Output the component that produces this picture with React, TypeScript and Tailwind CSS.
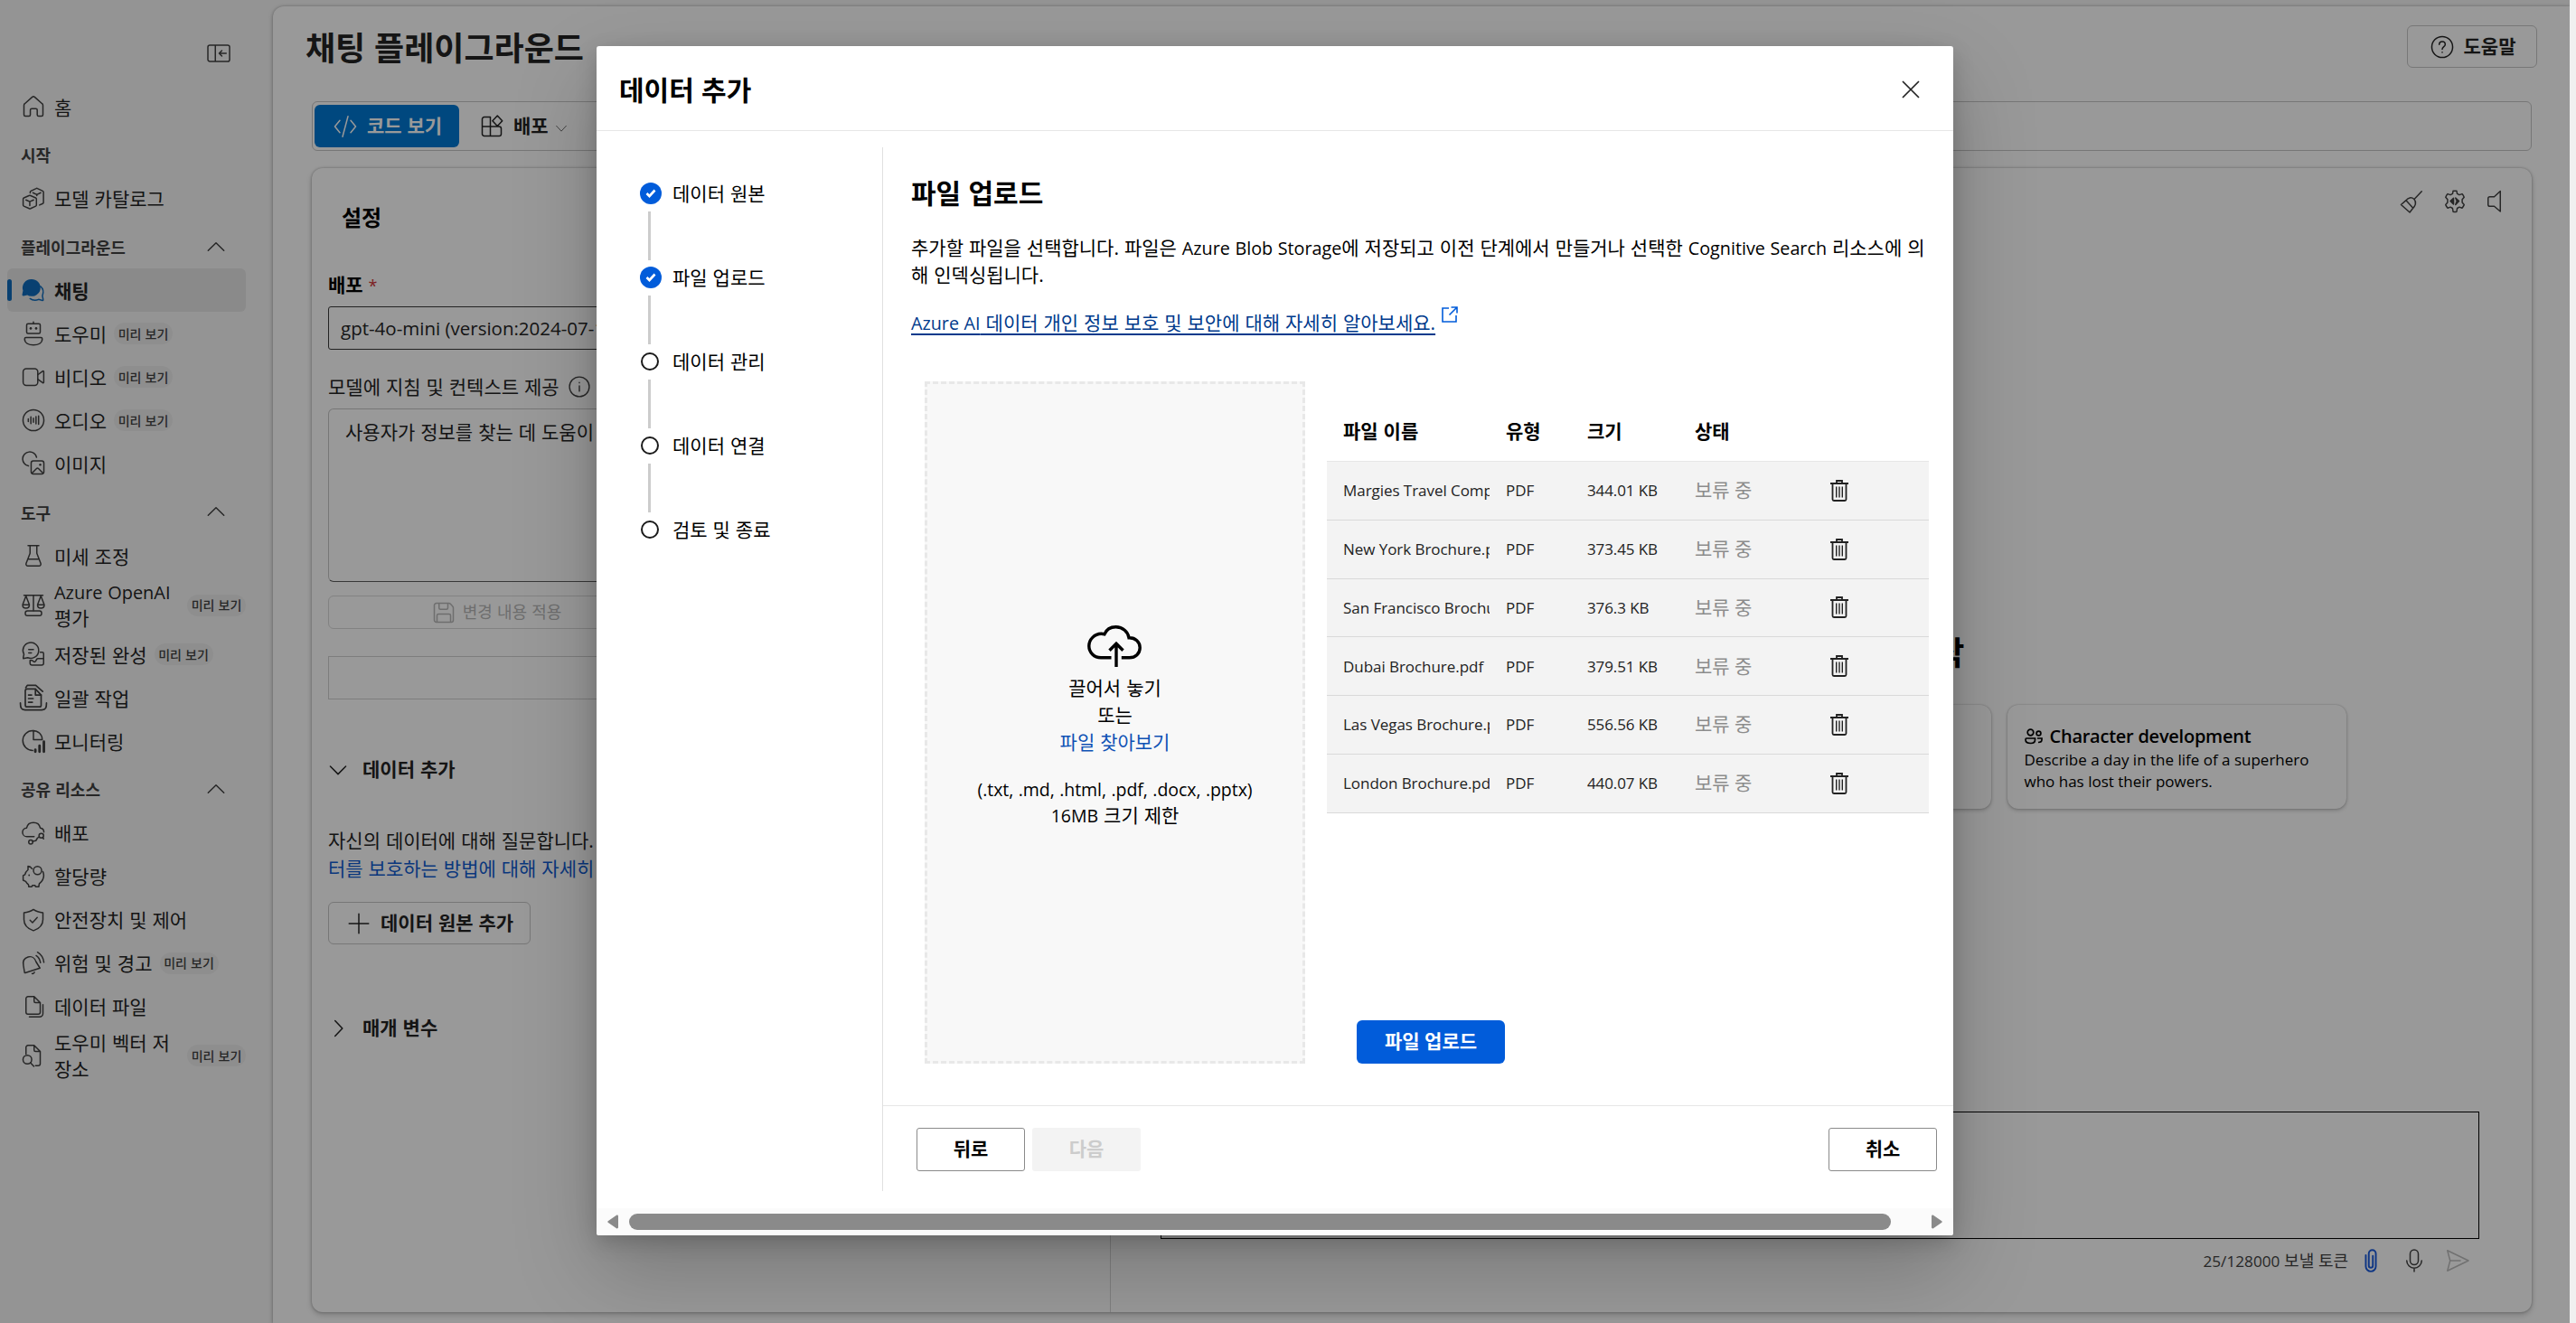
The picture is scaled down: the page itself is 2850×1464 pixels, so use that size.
import React from 'react';

type IconProps = { className?: string; children: React.ReactNode };

// all line icons share a 20x20 grid, one unit = 1.5px
const Icon = ({ className = "size-[30px]", children }: IconProps) => (
  <svg
    viewBox="0 0 20 20"
    className={`shrink-0 ${className}`}
    fill="none"
    stroke="currentColor"
    strokeWidth="1"
    strokeLinecap="round"
    strokeLinejoin="round"
  >
    {children}
  </svg>
);

const HomeIcon = () => (
  <Icon>
    <path d="M3 9.1c0-.5.2-1 .6-1.3l5.5-4.9c.5-.5 1.3-.5 1.8 0l5.5 4.9c.4.3.6.8.6 1.3V16c0 .6-.4 1-1 1h-2.2c-.6 0-1-.4-1-1v-3.5c0-.6-.4-1-1-1H8.700c-.6 0-1 .4-1 1V16c0 .6-.4 1-1 1H4c-.6 0-1-.4-1-1V9.100Z" />
  </Icon>
);
const CubesIcon = () => (
  <Icon>
    <path d="M6.700 7.700 2.900 9.300a.8.8 0 0 0-.5.7v4.700c0 .3.200.6.500.700l4 1.800c.300.100.700.100 1 0l3.800-1.800c.3-.1.500-.4.500-.7V10a.8.8 0 0 0-.5-.7L7.900 7.700a1.500 1.500 0 0 0-1.200 0ZM4.500 10.800l2.800 1.300 2.800-1.300M7.300 12.100V15" />
    <path d="M7.600 5.700V5c0-.3.200-.6.500-.7l3.900-1.900c.3-.2.700-.2 1 0l3.900 1.900c.3.100.5.400.5.700v7.800c0 .3-.2.600-.5.700l-2.400 1.100M9.600 5.500l2.900 1.400 2.900-1.400M12.500 6.900v.8" />
  </Icon>
);
const ChatIcon = () => (
  <Icon>
    <path fill="currentColor" stroke="none" d="M8.300 2a6.300 6.300 0 0 0-6 8.400l-.6 3c-.100.600.400 1.100 1 .900l2.800-.700A6.300 6.300 0 1 0 8.300 2Z" />
    <path d="M7.500 16.300c1 .8 2.200 1.200 3.600 1.200 1 0 1.900-.200 2.700-.600l2.900.700c.3.100.600-.200.500-.500l-.6-2.800c.9-2.400.7-5.300-1.400-7.100" />
  </Icon>
);
const BotIcon = () => (
  <Icon>
    <path d="M10 1.500v1.300M6 2.800h8c.6 0 1 .4 1 1V9c0 .6-.4 1-1 1H6c-.6 0-1-.4-1-1V3.800c0-.6.4-1 1-1ZM4.500 13h11c.6 0 1 .4 1 1 0 3-3 4.500-6.500 4.500S3.500 17 3.500 14c0-.6.4-1 1-1Z" />
    <circle cx="8" cy="6.300" r=".9" fill="currentColor" stroke="none" />
    <circle cx="12" cy="6.300" r=".9" fill="currentColor" stroke="none" />
  </Icon>
);
const VideoIcon = () => (
  <Icon>
    <rect x="2.400" y="4" width="10.800" height="12.300" rx="2.300" />
    <path d="m13.200 8.500 3.700-2.700c.3-.2.700 0 .7.400v7.800c0 .4-.4.600-.7.400l-3.700-2.700" />
  </Icon>
);
const AudioIcon = () => (
  <Icon>
    <circle cx="10" cy="10" r="7.700" />
    <path d="M6.200 9v2M8.100 7.500v5M10 8.500v3M11.900 7.300v5.400M13.800 6.800v6.200" />
  </Icon>
);
const ImageIcon = () => (
  <Icon>
    <path d="M6.300 11.700A5.200 5.200 0 1 1 12.300 5.300" />
    <rect x="8.300" y="8" width="9.400" height="9.600" rx="1.600" />
    <path d="m9 17 3.300-3.300c.4-.4 1-.4 1.400 0L17 17" />
    <circle cx="15" cy="10.800" r=".8" fill="currentColor" stroke="none" />
  </Icon>
);
const BeakerIcon = () => (
  <Icon>
    <path d="M6 2.500h8M7.500 2.500v5.700L4.600 15.600c-.3.900.3 1.900 1.300 1.900h8.200c1 0 1.600-1 1.300-1.900L12.500 8.200V2.500M6 12.500h8" />
  </Icon>
);
const ScalesIcon = () => (
  <Icon>
    <path d="M3 2.500h14M10 2.500v11.300M4.500 3 2 9.500M4.500 3 7 9.500M15.500 3 13 9.500M15.500 3 18 9.500M2 9.500h5c0 1.500-1.100 2.500-2.500 2.500S2 11 2 9.500ZM13 9.500h5c0 1.500-1.100 2.500-2.500 2.500S13 11 13 9.500Z" />
    <rect x="4" y="14" width="12" height="3.500" rx="1.500" />
  </Icon>
);
const SavedIcon = () => (
  <Icon>
    <path d="M2.500 12.300 3 10A5.800 5.800 0 1 1 5.800 12.500l-3.300.6ZM6.500 6.500h3.500M6.500 9h2" />
    <path d="M15 8.500h1.500c.6 0 1 .4 1 1v7c0 .8-.7 1.500-1.500 1.500H9c-.8 0-1.500-.7-1.500-1.500v-2h1.300c.8 0 1 1.200 2 1.200 1.200 0 1-2.500 2.500-2.500h4.200" />
  </Icon>
);
const BatchIcon = () => (
  <Icon className="size-[34px] -mx-0.5">
    <path d="M5 3.500 6 2h5.500l4.500 4M6 4.300h5.300l3.700 4V15c0 .6-.4 1-1 1H6c-.8 0-1.300-.500-1.300-1.200V5.500C4.700 4.800 5.200 4.300 6 4.300Z" />
    <path d="M11.300 4.500v3.800H15M6.800 8.300h2M6.800 10.600h3M6.800 13h2.500M1.500 13.500c0 3 .5 4.500 3 4.500h11c2.500 0 3-1.500 3-4.500" />
  </Icon>
);
const MonitorIcon = () => (
  <Icon>
    <path d="M9.500 17A7.300 7.300 0 0 1 9.500 2.300c4 0 7 2.800 7 6.700H10V2.300" />
    <path strokeWidth="1.900" d="M11.400 16.500v1.300M14.500 13.500v4.300M17.700 10.500v7.300" />
  </Icon>
);
const DeployIcon = () => (
  <Icon>
    <path d="M10.500 12.500H5.300a3.200 3.200 0 0 1-.3-6.400C5.500 3.700 7.500 2.200 10 2.200s4.500 1.500 5 3.900c1.700.200 2.700 1.400 2.700 3" />
    <circle cx="15.800" cy="11.800" r="1.700" />
    <circle cx="8" cy="16.500" r="1.500" />
    <path d="m9.500 16 2.300-.500 1.200-2 1.200-.8M16.800 13.200l.7 1" />
  </Icon>
);
const PiggyIcon = () => (
  <Icon>
    <path d="M9 4.200C8.200 3 7 2.300 6 2.300V5C4.700 6 4 7.300 3.800 8.500L2.400 9.200v3.500l1.900.9c.5.900 1.200 1.700 2 2.300l.3 1.600h2.200l.4-1h2l.4 1h2.300l.4-2.200c1.800-1.500 3.300-3.500 3.300-6.200 0-1-.3-2-.7-2.800" />
    <circle cx="13" cy="5.500" r="3" />
    <circle cx="6.800" cy="9" r=".6" fill="currentColor" stroke="none" />
  </Icon>
);
const ShieldIcon = () => (
  <Icon>
    <path d="M10 2.300c2 1.500 4.300 2.200 7 2.300v5c0 4-2.500 6.700-7 8.300-4.500-1.600-7-4.300-7-8.300v-5c2.700-.1 5-.8 7-2.300Z" />
    <path d="m7.500 10.200 1.800 1.800 3.500-3.800" />
  </Icon>
);
const AlertIcon = () => (
  <Icon>
    <path d="M3.500 17 2.600 11.500C2 8.200 3.500 6 6 5.300s5 .7 6 3.700l2.800 4.500L4 17ZM9 17.500c.8.300 1.600-.2 1.700-1" />
    <path d="M12 4.300c1.600 1 2.700 2.700 3.200 5.200M13 1.800c2.500 1.500 4.300 4 4.700 7.500" />
  </Icon>
);
const FilesIcon = () => (
  <Icon>
    <path d="M6 2.500h4.500L15 7v7c0 .8-.7 1.500-1.500 1.500H6c-.8 0-1.500-.7-1.500-1.500V4c0-.8.700-1.500 1.500-1.500ZM10.500 2.500V6c0 .6.400 1 1 1H15" />
    <path d="M17 8.500V15c0 1.400-1.100 2.500-2.500 2.500H7" />
  </Icon>
);
const DocSearchIcon = () => (
  <Icon>
    <path d="M4.500 9V4c0-.8.700-1.500 1.500-1.500h4.500L15 7v9c0 .8-.7 1.500-1.500 1.500h-2M10.500 2.500V6c0 .6.400 1 1 1H15" />
    <circle cx="5.500" cy="13" r="3.200" />
    <path d="m7.800 15.400 2.500 2.600" />
  </Icon>
);
const ChevronUp = () => (
  <Icon>
    <path d="m4.200 12.200 5.800-5.700 5.800 5.700" />
  </Icon>
);
const TrashIcon = () => (
  <svg viewBox="0 0 20 24" className="h-6 w-5" fill="none" stroke="#222" strokeWidth="1.800">
    <path d="M0 4h20M2.500 4v17.500c0 .8.600 1.500 1.500 1.500h12c.9 0 1.500-.7 1.500-1.500V4M7 4V1h6v3" />
    <path strokeWidth="1.400" d="M6.700 7.500v12M10 7.500v12M13.300 7.500v12" />
  </svg>
);

type NavEntry = { label: string; icon?: React.ReactNode; badge?: boolean; active?: boolean; header?: boolean; open?: boolean; tall?: boolean };

const nav: NavEntry[] = [
  { label: "홈", icon: <HomeIcon /> },
  { label: "시작", header: true },
  { label: "모델 카탈로그", icon: <CubesIcon /> },
  { label: "플레이그라운드", header: true, open: true },
  { label: "채팅", icon: <ChatIcon />, active: true },
  { label: "도우미", icon: <BotIcon />, badge: true },
  { label: "비디오", icon: <VideoIcon />, badge: true },
  { label: "오디오", icon: <AudioIcon />, badge: true },
  { label: "이미지", icon: <ImageIcon /> },
  { label: "도구", header: true, open: true },
  { label: "미세 조정", icon: <BeakerIcon /> },
  { label: "Azure OpenAI 평가", icon: <ScalesIcon />, badge: true, tall: true },
  { label: "저장된 완성", icon: <SavedIcon />, badge: true },
  { label: "일괄 작업", icon: <BatchIcon /> },
  { label: "모니터링", icon: <MonitorIcon /> },
  { label: "공유 리소스", header: true, open: true },
  { label: "배포", icon: <DeployIcon /> },
  { label: "할당량", icon: <PiggyIcon /> },
  { label: "안전장치 및 제어", icon: <ShieldIcon /> },
  { label: "위험 및 경고", icon: <AlertIcon />, badge: true },
  { label: "데이터 파일", icon: <FilesIcon /> },
  { label: "도우미 벡터 저장소", icon: <DocSearchIcon />, badge: true, tall: true },
];

const NavRow = ({ item }: { item: NavEntry }) => {
  if (item.header) {
    return (
      <div className="flex h-[53.7px] items-center justify-between pl-[15px] pr-[18px] pt-1.5 text-[18px] font-bold text-[#424242]">
        <span className="pt-0.5">{item.label}</span>
        {item.open && <ChevronUp />}
      </div>
    );
  }
  return (
    <div
      className={`relative flex items-center rounded-md pl-[14px] text-[#424242] ${item.tall ? "h-[61px]" : "h-12"} ${item.active ? "bg-[#e6e6e6]" : ""}`}
    >
      {item.active && <span className="absolute left-0 top-3 h-6 w-[5px] rounded-full bg-[#0f6cbd]" />}
      <span className={item.active ? "text-[#0f6cbd]" : ""}>{item.icon}</span>
      <span
        className={`ml-2 pt-px text-[#242424] ${item.tall ? "w-[140px] break-all leading-[29px]" : "leading-[30px]"} ${item.active ? "font-bold" : ""}`}
      >
        {item.label.startsWith("Azure") ? (
          <>
            <span className="text-[0.95em]">Azure OpenAI</span>
            <br />
            평가
          </>
        ) : (
          item.label
        )}
      </span>
      {item.badge && (
        <span className={`flex h-6 w-[65px] shrink-0 items-center justify-center rounded-full bg-[#ededed] text-[14px] font-medium ${item.tall ? "ml-[7px]" : "ml-2"}`}>
          미리 보기
        </span>
      )}
    </div>
  );
};

const Sidebar = () => (
  <aside className="flex w-[302px] shrink-0 flex-col px-2 pr-[30px]">
    <div className="flex h-[94px] items-center justify-end pr-[15px] pt-6 text-[#424242]">
      <Icon>
        <path d="M3.500 4h13c.8 0 1.500.6 1.500 1.400v9.200c0 .8-.7 1.400-1.500 1.400h-13c-.8 0-1.500-.6-1.500-1.400V5.400C2 4.600 2.700 4 3.500 4ZM7.500 4v12M15.500 10H10.500M12.300 8l-2 2 2 2" />
      </Icon>
    </div>
    {nav.map((item) => (
      <NavRow key={item.label} item={item} />
    ))}
  </aside>
);

const SettingsColumn = () => (
  <div className="flex w-[884px] shrink-0 flex-col border-r border-[#d6d6d6] px-[18px] pt-[39px]">
    <h2 className="ml-[15px] h-8 text-[24px] font-bold leading-8 text-black">설정</h2>
    <div className="mt-11 h-7 font-bold leading-7 text-black">
      배포 <span className="text-[18px] font-normal text-[#d13438]">*</span>
    </div>
    <div className="mt-2.5 flex h-12 items-center rounded-[3px] border border-[#3a3a3a] px-[13px] text-[20.5px] text-[#242424] [word-spacing:0px]">
      gpt-4o-mini (version:2024-07-18)
    </div>
    <div className="mt-[27px] flex h-7 items-center gap-2 leading-7 text-[#242424]">
      모델에 지침 및 컨텍스트 제공
      <Icon className="size-[28px] text-[#424242]">
        <circle cx="10" cy="10" r="7.800" />
        <path d="M10 9.200v4.300M10 6.600v.3" />
      </Icon>
    </div>
    <div className="mt-2.5 h-48 rounded-md border border-[#c7c7c7] border-b-[#5c5c5c] px-[18px] pt-2.5 leading-[30px] text-[#242424]">
      사용자가 정보를 찾는 데 도움이 되는 AI 도우미입니다.
    </div>
    <div className="mt-[15px] flex h-[37px] w-[371px] items-center justify-center gap-1.5 rounded-md border border-[#d9d9d9] text-[18px] text-[#b8b8b8]">
      <Icon className="size-[30px]">
        <path d="M4.500 3h9.300c.4 0 .8.200 1.100.500l1.700 1.900c.3.300.4.600.4 1V15.500c0 .8-.7 1.500-1.500 1.500h-11c-.8 0-1.500-.7-1.500-1.500v-11C3 3.700 3.700 3 4.500 3ZM6.500 3v3.500c0 .6.400 1 1 1h4.500c.6 0 1-.4 1-1V3M5 17v-5c0-.6.4-1 1-1h8c.6 0 1 .4 1 1v5" />
      </Icon>
      변경 내용 적용
    </div>
    <div className="mt-[30px] h-12 border border-[#d1d1d1]" />
    <div className="mt-[63px] flex h-[30px] items-center gap-2 font-bold text-[#242424]">
      <Icon className="-ml-1 size-[30px]">
        <path d="m4.300 7.300 5.700 5.800 5.700-5.800" />
      </Icon>
      <span className="ml-1">데이터 추가</span>
    </div>
    <p className="mt-12 h-[62px] overflow-hidden whitespace-nowrap leading-[31px] text-[#242424]">
      자신의 데이터에 대해 질문합니다. 데이
      <br />
      <span className="text-[#115cd0]">터를 보호하는 방법에 대해 자세히 알아보세요.</span>
    </p>
    <div className="mt-[21px] flex h-[47px] w-[224px] items-center rounded-md border border-[#c7c7c7] pl-[18px] font-bold text-[#242424]">
      <Icon>
        <path d="M10 2.800v14.400M2.800 10h14.400" />
      </Icon>
      <span className="ml-[9px]">데이터 원본 추가</span>
    </div>
    <div className="mt-[78px] flex h-[30px] items-center font-bold text-[#242424]">
      <Icon className="-ml-1 size-[30px]">
        <path d="m7.800 4.300 5.400 5.700-5.400 5.700" />
      </Icon>
      <span className="ml-3">매개 변수</span>
    </div>
  </div>
);

const ChatColumn = () => (
  <div className="flex grow flex-col text-[#424242] [word-spacing:0px]">
    <div className="flex justify-end gap-[18px] pr-[22px] pt-[22px]">
      <Icon>
        <path d="M17.500 2.500 12 8.300M12 8.300c-2.200-1.900-4.500-1-6 .8L2.300 12.300 8.700 18l1.800-2.300c2.300-2.400 3.200-5.300 1.500-7.400ZM6 9.100l5 5.500" />
      </Icon>
      <Icon>
        <path d="M8.700 2.200a8 8 0 0 1 2.600 0l.4 2 1.600.9 2-.7a8 8 0 0 1 1.500 2.400l-1.400 1.700v2.200l1.400 1.700a8 8 0 0 1-1.500 2.400l-2-.7-1.600.9-.4 2.500a8 8 0 0 1-2.600 0l-.4-2.500-1.600-.9-2 .7a8 8 0 0 1-1.500-2.400l1.400-1.700V8.500L3.200 6.800a8 8 0 0 1 1.500-2.400l2 .7 1.600-.9.400-2Z" />
        <path fill="currentColor" d="M9 7.500 6.700 9.700 9 12V7.500ZM10.500 7.300l2.500 2.400-2.500 2.600 1-2.600-1-2.400Z" />
      </Icon>
      <Icon>
        <path d="M11.500 2.300v15L7 13.500H3.800c-.7 0-1.300-.5-1.300-1.200V7.700c0-.7.600-1.200 1.300-1.200H7l4.500-4.200Z" />
      </Icon>
    </div>
    <h2 className="mt-[461px] h-12 text-center text-[36px] font-bold leading-[48px] text-black">샘플 프롬프트로 시작</h2>
    <div className="mt-[33px] flex justify-center gap-[18px]">
      <div className="h-[115px] w-[375px] rounded-xl bg-white shadow-[0_0_2px_rgba(0,0,0,0.25),0_2px_4px_rgba(0,0,0,0.2)]" />
      <div className="h-[115px] w-[375px] rounded-xl bg-white shadow-[0_0_2px_rgba(0,0,0,0.25),0_2px_4px_rgba(0,0,0,0.2)]" />
      <div className="h-[115px] w-[375px] rounded-xl bg-white pl-[19px] pt-5 text-black shadow-[0_0_2px_rgba(0,0,0,0.25),0_2px_4px_rgba(0,0,0,0.2)]">
        <div className="flex h-[29px] items-center gap-2 text-[20px] font-semibold tracking-[-0.25px]">
          <svg viewBox="0 0 20 18" className="h-[18px] w-5" fill="none" stroke="currentColor" strokeWidth="1.700">
            <circle cx="6.500" cy="4.500" r="3.300" />
            <circle cx="15.500" cy="5.500" r="2.400" />
            <path d="M2 11h9.500v1.500c0 3-2 4-4.700 4S1 15.500 1 12.500c0-1 .3-1.500 1-1.500ZM14 11h5v1.500c0 2-1.500 3-4 3" />
          </svg>
          Character development
        </div>
        <p className="text-[17px] leading-6">
          Describe a day in the life of a superhero
          <br />
          who has lost their powers.
        </p>
      </div>
    </div>
    <div className="ml-[55px] mr-[58px] mt-[335px] h-[141px] border border-black" />
    <div className="mr-[58px] mt-[9px] flex h-[30px] items-center justify-end text-[18px]">
      <span>
        <span className="text-[17.2px]">25/128000</span> 보낼 토큰
      </span>
      <Icon className="ml-2.5 size-[30px] text-[#1a5bdc]">
        <path strokeWidth="1.300" d="M6.300 6v8.200a3.700 3.700 0 0 0 7.400 0V4.800a2.600 2.600 0 0 0-5.200 0v8.800a1.500 1.500 0 0 0 3 0V6.500" />
      </Icon>
      <Icon className="ml-[18px] size-[30px]">
        <path d="M10 2a3 3 0 0 1 3 3v5a3 3 0 0 1-6 0V5a3 3 0 0 1 3-3ZM4.500 10a5.500 5.500 0 0 0 11 0M10 15.500v2.500" />
      </Icon>
      <Icon className="ml-[18px] mr-[9px] size-[30px] text-[#bdbdbd]">
        <path d="M2.500 2.500 18 10 2.500 17.500l2-7.500-2-7.500ZM4.500 10H12" />
      </Icon>
    </div>
  </div>
);

const Playground = () => (
  <main className="mt-[7px] flex grow flex-col rounded-tl-xl bg-white shadow-[0_0_3px_rgba(0,0,0,0.25),0_2px_6px_rgba(0,0,0,0.2)]">
    <div className="flex h-[105px] shrink-0 items-start justify-between pl-9 pr-9 pt-[21px]">
      <h1 className="mt-0.5 text-[36px] font-bold leading-[48px] text-[#242424]">채팅 플레이그라운드</h1>
      <div className="flex h-[47px] w-36 items-center justify-center gap-[9px] rounded-md border border-[#c7c7c7] font-bold text-[#242424]">
        <Icon>
          <circle cx="10" cy="10" r="7.700" />
          <path d="M7.800 8.200c0-1.300.9-2.200 2.200-2.200s2.200.9 2.200 2.100c0 1.700-2.200 1.700-2.200 3.600M10 13.800v.2" />
        </Icon>
        도움말
      </div>
    </div>
    <div className="ml-[43px] mr-[42px] flex h-[55px] shrink-0 items-center rounded-md border border-[#c7c7c7] pl-0.5">
      <div className="flex h-[47px] w-40 items-center justify-center gap-[9px] rounded-md bg-[#0078d4] font-bold text-white">
        <Icon>
          <path d="M6 5.500 2.300 10 6 14.500M14 5.500l3.700 4.500-3.700 4.500M12 2.500l-4 15" />
        </Icon>
        코드 보기
      </div>
      <div className="ml-[21px] flex items-center font-bold text-[#242424]">
        <Icon>
          <path d="M4.500 3H9v14H4.500C3.700 17 3 16.300 3 15.500v-11C3 3.700 3.700 3 4.500 3ZM3 10h12.500c.8 0 1.500.7 1.500 1.500v4c0 .8-.7 1.500-1.500 1.500H9M14.200 2l3.600 3.800-3.600 3.800-3.600-3.800L14.200 2Z" />
        </Icon>
        <span className="ml-[9px]">배포</span>
        <Icon className="ml-[5px] mt-1 size-[18px] text-[#616161]">
          <path d="m4 7 6 6.500L16 7" />
        </Icon>
      </div>
    </div>
    <div className="mb-3 ml-[43px] mr-[42px] mt-[19px] flex grow rounded-xl bg-white shadow-[0_0_3px_rgba(0,0,0,0.3),0_3px_6px_rgba(0,0,0,0.2)]">
      <SettingsColumn />
      <ChatColumn />
    </div>
  </main>
);

const steps = [
  { label: "데이터 원본", done: true },
  { label: "파일 업로드", done: true },
  { label: "데이터 관리", done: false },
  { label: "데이터 연결", done: false },
  { label: "검토 및 종료", done: false },
];

const files = [
  { name: "Margies Travel Company.pdf", size: "344.01 KB" },
  { name: "New York Brochure.pdf", size: "373.45 KB" },
  { name: "San Francisco Brochure.pdf", size: "376.3 KB" },
  { name: "Dubai Brochure.pdf", size: "379.51 KB" },
  { name: "Las Vegas Brochure.pdf", size: "556.56 KB" },
  { name: "London Brochure.pdf", size: "440.07 KB" },
];

const StepList = () => (
  <div className="flex w-[316px] shrink-0 flex-col pl-12 pt-14">
    {steps.map((step, i) => (
      <div key={step.label} className="h-[93.100px]">
        <div className="flex h-[26px] items-center gap-3">
          {step.done ? (
            <span className="flex size-[24px] items-center justify-center rounded-full bg-[#015cda]">
              <svg viewBox="0 0 12 12" className="size-3" fill="none" stroke="white" strokeWidth="2.600">
                <path d="m1.500 6 3 3 6-6.500" />
              </svg>
            </span>
          ) : (
            <span className="ml-px mr-[3px] size-5 rounded-full border-2 border-[#1a1a1a]" />
          )}
          <span className="pt-px">{step.label}</span>
        </div>
        {i < steps.length - 1 && <div className="ml-[9px] mt-[7px] h-[54px] w-[3px] bg-[#ccc]" />}
      </div>
    ))}
  </div>
);

const DropZone = () => (
  <div className="flex h-[755px] w-[421px] flex-col items-center border-[3px] border-dashed border-[#e8e8e8] bg-[#f8f8f8] pt-[267px]">
    <svg viewBox="0 0 60 46" className="-ml-0.5 h-[46px] w-[60px]" fill="none" stroke="black" strokeWidth="3.400">
      <path d="M26.500 35.800H15C7.500 35.800 1.800 30 1.800 22.800S8 9.300 15.500 9.300c1.200 0 2.300.2 3.400.5C21 4.700 26 1.700 31.500 1.700c7.500 0 13.500 5.300 14.500 12 7-.3 12.200 4.500 12.200 11s-5 11.100-11.700 11.100h-8.700M32 46V20.500M24.500 27.700l7.500-7.500 7.500 7.500" />
    </svg>
    <div className="mt-2 text-center leading-[30px]">
      <p>끌어서 놓기</p>
      <p>또는</p>
      <p className="text-[#0f52b5]">파일 찾아보기</p>
      <p className="mt-[23px] text-[19.5px] leading-[29px] tracking-[-0.05px]">(.txt, .md, .html, .pdf, .docx, .pptx)</p>
      <p className="leading-[29px]">
        <span className="text-[19.5px]">16MB</span> 크기 제한
      </p>
    </div>
  </div>
);

const FileTable = () => (
  <div className="w-[666px]">
    <div className="grid h-[65px] grid-cols-[180px_90px_119px_150px_1fr] items-center pl-[18px] font-bold">
      <span>파일 이름</span>
      <span>유형</span>
      <span>크기</span>
      <span>상태</span>
    </div>
    <div className="border-t border-[#e6e6e6]">
      {files.map((file) => (
        <div
          key={file.name}
          className="grid h-[64.800px] grid-cols-[180px_90px_119px_150px_1fr] items-center border-b border-[#d9d9d9] bg-[#f3f3f3] pl-[18px] text-[17px] text-[#222] [word-spacing:0px]"
        >
          <span className="mr-[18px] overflow-hidden whitespace-nowrap tracking-[-0.05px]">{file.name}</span>
          <span>PDF</span>
          <span className="tracking-[-0.1px]">{file.size}</span>
          <span className="text-[21px] text-[#8c8c8c]">보류 중</span>
          <TrashIcon />
        </div>
      ))}
    </div>
  </div>
);

const AddDataDialog = () => (
  <div className="absolute left-[660px] top-[51px] flex h-[1316px] w-[1501px] flex-col overflow-hidden rounded-[3px] bg-white text-black">
    <div className="flex h-[94px] shrink-0 items-center justify-between border-b border-[#e6e6e6] pl-[25px] pr-[37px]">
      <h2 className="pt-[3px] text-[30px] font-bold">데이터 추가</h2>
      <svg viewBox="0 0 20 20" className="mt-0.5 size-5" stroke="#222" strokeWidth="1.700">
        <path d="m1 1 18 18M19 1 1 19" />
      </svg>
    </div>
    <div className="flex h-[1173px] shrink-0">
      <StepList />
      <div className="mt-[18px] flex h-[1155px] grow flex-col border-l border-[#e0e0e0]">
        <div className="flex h-[1060px] flex-col pl-[31px]">
          <h3 className="mt-[29px] h-11 text-[30px] font-bold leading-[44px]">파일 업로드</h3>
          <p className="mt-6 whitespace-nowrap leading-[29.500px]">
            추가할 파일을 선택합니다. 파일은 <span className="text-[0.940em]">Azure Blob Storage</span>에 저장되고 이전 단계에서 만들거나 선택한{" "}
            <span className="text-[0.940em]">Cognitive Search</span> 리소스에 의
            <br />해 인덱싱됩니다.
          </p>
          <div className="mt-[23px] flex h-[30px] leading-[30px]">
            <a className="text-[#003a8c] underline decoration-2 underline-offset-[4px]">
              <span className="text-[0.940em]">Azure AI</span> 데이터 개인 정보 보호 및 보안에 대해 자세히 알아보세요.
            </a>
            <svg viewBox="0 0 18 18" className="-mt-[3px] ml-[7px] size-[18px]" fill="none" stroke="#015cda" strokeWidth="1.600">
              <path d="M8 2H1v15h15v-7M10.500 1H17v6.500M17 1 8.500 9.500" />
            </svg>
          </div>
          <div className="ml-[15px] mt-[50px] flex gap-6">
            <DropZone />
            <div className="flex h-[755px] flex-col justify-between pt-[23px]">
              <FileTable />
              <button className="ml-[33px] h-12 w-[164px] rounded-md bg-[#015cda] font-bold text-white">파일 업로드</button>
            </div>
          </div>
        </div>
        <div className="flex border-t border-[#e6e6e6] pl-[37px] pr-[18px] pt-6">
          <button className="h-12 w-[120px] rounded-[3px] border border-[#8a8a8a] font-bold">뒤로</button>
          <button className="ml-2 h-12 w-[120px] rounded-[3px] bg-[#f3f3f3] font-bold text-[#ccc]">다음</button>
          <button className="ml-auto h-12 w-[120px] rounded-[3px] border border-[#8a8a8a] font-bold">취소</button>
        </div>
      </div>
    </div>
    <div className="mt-auto flex h-[30px] items-center bg-[#fbfbfb] px-3">
      <svg viewBox="0 0 12 16" className="h-4 w-3" fill="#8a8a8a">
        <path d="M10 .8 1 7a1.200 1.200 0 0 0 0 2l9 6.200c.8.500 2 0 2-1V1.800c0-1-1.200-1.500-2-1Z" />
      </svg>
      <div className="ml-3 h-[18px] w-[1396px] rounded-full bg-[#8a8a8a]" />
      <svg viewBox="0 0 12 16" className="ml-auto h-4 w-3" fill="#8a8a8a">
        <path d="M2 .8 11 7a1.200 1.200 0 0 1 0 2l-9 6.200c-.8.500-2 0-2-1V1.800C0 .8 1.200.3 2 .8Z" />
      </svg>
    </div>
  </div>
);

const App = () => {
  return (
    <div className="relative flex h-[1464px] w-full overflow-hidden bg-[#f0f0f0] font-['Open_Sans','Noto_Sans_CJK_KR',sans-serif] text-[21px] [word-spacing:0.5px]">
      <div className="flex w-[2843px] shrink-0 overflow-hidden bg-[#f7f7f7]">
        <Sidebar />
        <Playground />
      </div>
      {/* dimmed backdrop stops short of the window scrollbar */}
      <div className="absolute inset-y-0 left-0 w-[2843px] overflow-hidden bg-black/40">
        <div className="absolute left-[660px] top-[51px] h-[1316px] w-[1501px] shadow-[0_38px_86px_rgba(0,0,0,0.22),0_7px_22px_rgba(0,0,0,0.18)]" />
        <AddDataDialog />
      </div>
    </div>
  );
};

export default App;
